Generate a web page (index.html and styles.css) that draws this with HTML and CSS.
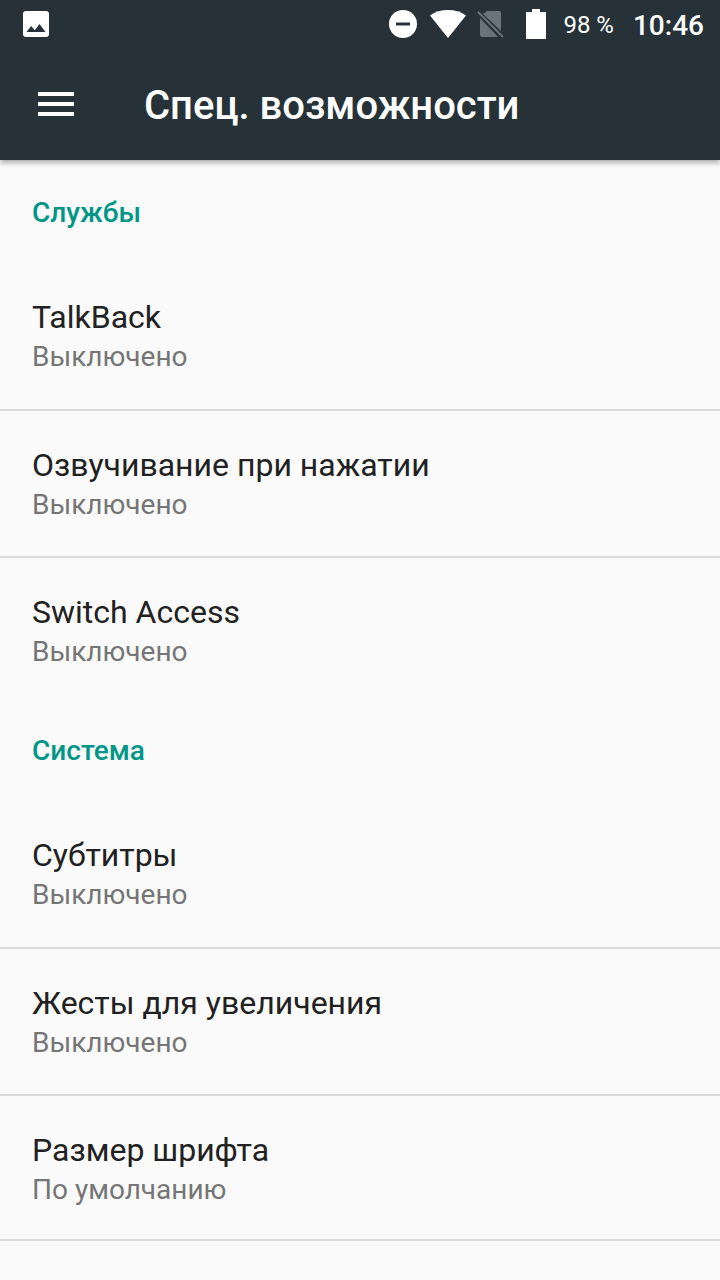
FILE: index.html
```html
<!DOCTYPE html>
<html lang="ru">
<head>
<meta charset="utf-8">
<title>Спец. возможности</title>
<link rel="stylesheet" href="styles.css">
</head>
<body>
<header class="header">
  <div class="status">
    <svg class="picture" width="26" height="26" viewBox="0 0 26 26"><path fill="#fff" fill-rule="evenodd" d="M3 0h20a3 3 0 0 1 3 3v20a3 3 0 0 1-3 3H3a3 3 0 0 1-3-3V3a3 3 0 0 1 3-3zM3.500 21h19l-6-8-4.800 6.200-3.500-4.200z"/></svg>
    <svg class="dnd" width="28" height="28" viewBox="0 0 28 28"><circle cx="14" cy="14" r="14" fill="#fff"/><path d="M7 12.500h14v3H7z" fill="#263238"/></svg>
    <svg class="wifi" width="36" height="28" viewBox="0 0 36 28"><path fill="#fff" d="M0 5.500C10-1.800 26-1.800 36 5.500L18 28z"/></svg>
    <svg class="sim" width="28" height="30" viewBox="0 0 28 30"><path fill="#68737a" d="M10 2h12a2 2 0 0 1 2 2v18L6 5zM3 9l18 19H5a2 2 0 0 1-2-2z"/><path d="M1 3l25 25" stroke="#68737a" stroke-width="2"/></svg>
    <svg class="battery" width="20" height="30" viewBox="0 0 20 30"><path fill="#fff" d="M6 0h8v3h6v27H0V3h6z"/></svg>
    <span class="percent">98 %</span>
    <span class="clock">10:46</span>
  </div>
  <div class="toolbar">
    <svg class="menu" width="36" height="24" viewBox="0 0 36 24"><path fill="#fff" d="M0 0h36v4H0zM0 10h36v4H0zM0 20h36v4H0z"/></svg>
    <h1 class="title">Спец. возможности</h1>
  </div>
</header>
<main class="content">
  <section class="group">
    <h2 class="label">Службы</h2>
    <div class="item"><div class="name">TalkBack</div><div class="state">Выключено</div></div>
    <div class="item"><div class="name">Озвучивание при нажатии</div><div class="state">Выключено</div></div>
    <div class="item"><div class="name">Switch Access</div><div class="state">Выключено</div></div>
  </section>
  <section class="group">
    <h2 class="label">Система</h2>
    <div class="item"><div class="name">Субтитры</div><div class="state">Выключено</div></div>
    <div class="item"><div class="name">Жесты для увеличения</div><div class="state">Выключено</div></div>
    <div class="item ruled"><div class="name">Размер шрифта</div><div class="state">По умолчанию</div></div>
  </section>
</main>
</body>
</html>
```
FILE: styles.css
```css
* { box-sizing: border-box; }
body { margin: 0; height: 1280px; overflow: hidden; background: #fafafa; font-family: Roboto, sans-serif; }
.header { position: relative; height: 160px; background: #263238; color: #fff; box-shadow: 0 2px 6px rgba(0,0,0,.4); }
.status { display: flex; align-items: center; height: 48px; padding: 0 16px 0 23px; }
.dnd { margin-left: auto; margin-right: 13px; }
.wifi { margin-right: 11px; }
.sim { margin-right: 21px; }
.battery { margin-right: 17px; }
.percent { font-size: 24px; margin-right: 19px; padding-top: 2px; }
.clock { font-size: 28px; font-weight: 500; padding-top: 2px; }
.toolbar { display: flex; align-items: center; height: 112px; padding-left: 38px; }
.title { margin: 4px 0 0 70px; font-size: 40px; line-height: 48px; font-weight: 500; }
.label { margin: 0; height: 102px; padding: 36px 32px 0; font-size: 28px; line-height: 34px; font-weight: 500; color: #009688; }
.group + .group .label { margin-top: -5px; }
.item { height: 147px; padding: 36px 32px 0; }
.item + .item { border-top: 2px solid #dadada; padding-top: 35px; }
.ruled { border-bottom: 2px solid #dadada; }
.name { font-size: 32px; line-height: 38px; color: #212121; }
.state { font-size: 28px; line-height: 34px; margin-top: 4px; color: #757575; }
```
